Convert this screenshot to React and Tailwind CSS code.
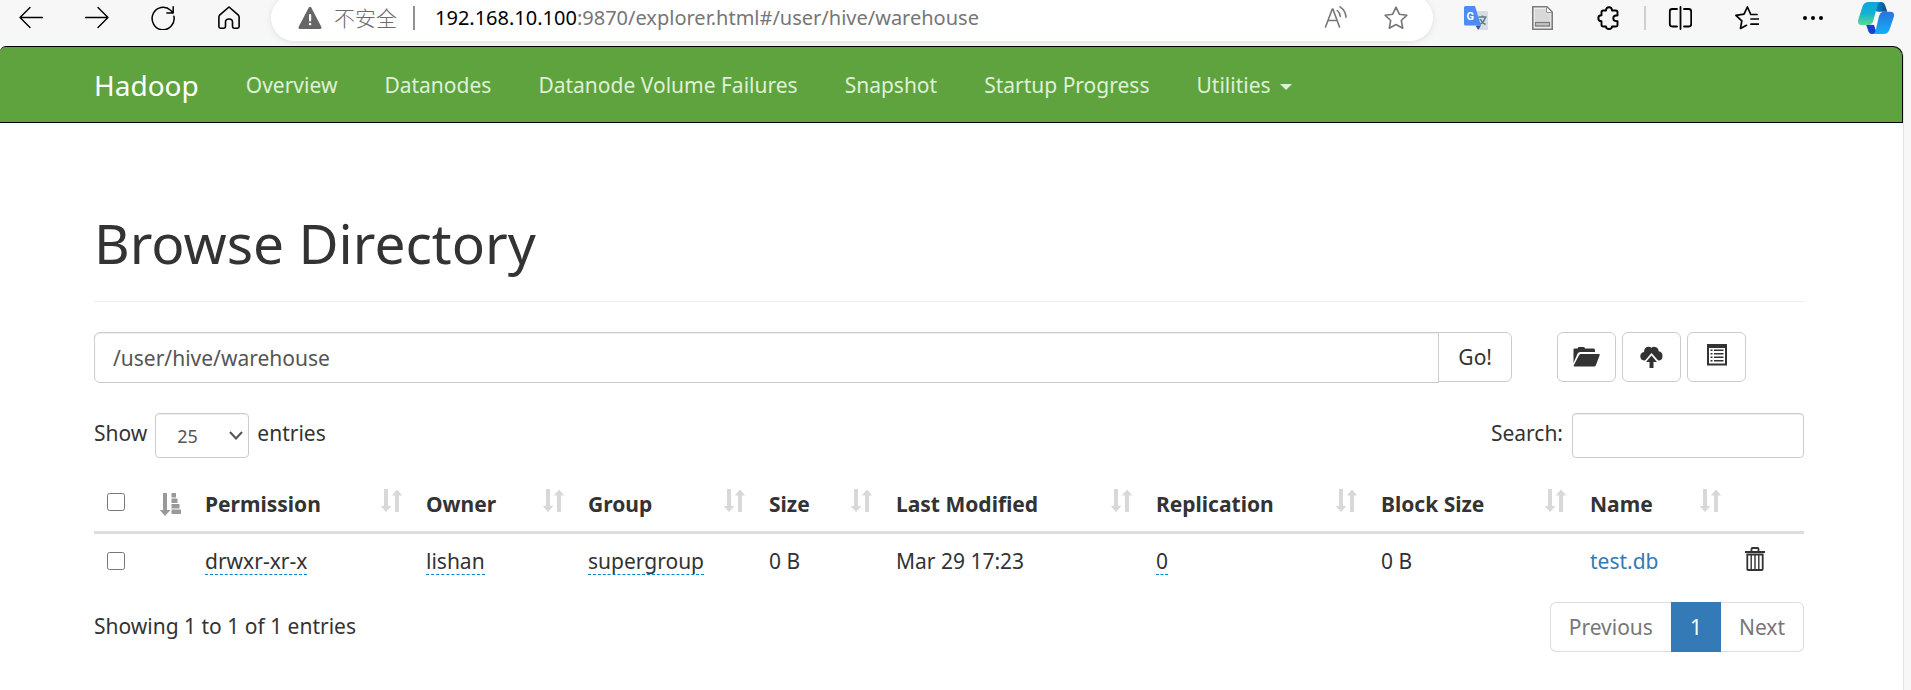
import React from "react";

const NAV = ["Overview", "Datanodes", "Datanode Volume Failures", "Snapshot", "Startup Progress"];

const COLUMNS = [
  { label: "Permission", width: "w-[221px]" },
  { label: "Owner", width: "w-[162px]" },
  { label: "Group", width: "w-[181px]" },
  { label: "Size", width: "w-[127px]" },
  { label: "Last Modified", width: "w-[260px]" },
  { label: "Replication", width: "w-[225px]" },
  { label: "Block Size", width: "w-[209px]" },
  { label: "Name", width: "w-[155px]" },
];

function Line({ children, className = "", width = 1.6 }) {
  return (
    <svg
      viewBox="0 0 24 24"
      className={"h-6 w-6 shrink-0 " + className}
      fill="none"
      stroke="currentColor"
      strokeWidth={width}
      strokeLinecap="round"
      strokeLinejoin="round"
      aria-hidden="true"
    >
      {children}
    </svg>
  );
}

function ToolButton({ label, children }) {
  return (
    <button type="button" aria-label={label} className="shrink-0">
      {children}
    </button>
  );
}

function BrowserBar() {
  return (
    <header className="h-[46px] overflow-hidden bg-[#f7f7f7] text-black">
      <div className="flex h-[35px] items-center pl-[19px] pr-[17px]">
        <div className="flex gap-[42px]">
          <ToolButton label="Back">
            <Line width={1.4}><path d="M23.5 11.5H1M11 1.5L1 11.5l10 10" /></Line>
          </ToolButton>
          <ToolButton label="Forward">
            <Line width={1.4}><path d="M.5 11.5H23M13 1.5l10 10-10 10" /></Line>
          </ToolButton>
          <ToolButton label="Refresh">
            <Line width={1.5}><path d="M22.9 10.2A11 11.3 0 1 1 19.6 4.2L22 6.7M22.2.8v6.1h-6.3" /></Line>
          </ToolButton>
          <ToolButton label="Home">
            <Line width={1.6}>
              <path d="M12 1L2.6 9.2Q1.9 9.9 1.9 11v9.6Q1.9 22.2 3.5 22.2h3.4Q8.500 22.200 8.500 20.600V16q0-3 3.500-3t3.500 3v4.600q0 1.600 1.600 1.600h3.400q1.600 0 1.600-1.600V11q0-1.100-.7-1.800L12 1z" />
            </Line>
          </ToolButton>
        </div>
        <div className="ml-[30px] mr-[31px] flex h-[46px] flex-1 items-center rounded-full bg-white pl-[27px] pr-[25px] shadow-[0_1px_6px_rgba(0,0,0,0.10)]">
          <svg viewBox="0 0 24 24" className="h-6 w-6 shrink-0" aria-hidden="true">
            <path d="M12 .8L23.300 20.800Q24 23 22 23H2Q0 23 .7 20.800L10.900 1.300Q12 .2 13.100 1.300L23.300 20.800" fill="#666" />
            <rect x="11" y="8" width="2.200" height="7.500" rx="1" fill="#fff" />
            <circle cx="12.100" cy="18" r="1.300" fill="#fff" />
          </svg>
          <span className="ml-3 text-[21px] font-light leading-[30px] text-[#6b6b6b]">不安全</span>
          <span className="ml-4 h-6 w-[2px] bg-[#919191]" />
          <p className="ml-5 flex-1 text-[20px] leading-[30px] text-[#767676]">
            <span className="text-black">192.168.10.100</span>:9870/explorer.html#/user/hive/warehouse
          </p>
          <div className="flex gap-9 text-[#767676]">
            <ToolButton label="Read aloud">
              <Line width={1.6}>
                <path d="M1.500 21L8.300 3h.6l6.600 18M4 14.500h9M13.300 4.500q2.700 2.200 3 6M16 .9q5.700 4 6 10.200" />
              </Line>
            </ToolButton>
            <ToolButton label="Add to favorites">
              <Line width={1.6}>
                <path d="M12 1.200l3.300 7 7.600 1-5.600 5.300 1.400 7.700L12 18.500l-6.700 3.700 1.400-7.700L1.100 9.200l7.600-1z" />
              </Line>
            </ToolButton>
          </div>
        </div>
        <div className="flex items-center">
          <ToolButton label="Translate">
            <svg viewBox="0 0 24 24" className="h-6 w-6" aria-hidden="true">
              <path d="M10 5h13q1 0 1 1v17q0 1-1 1H15z" fill="#d9dce0" />
              <path d="M14.500 11h8M18.500 9.500V11M21.500 11q-1.500 5-6 7.500M16 13q2 3.500 5.500 5.500" stroke="#5c7c8a" strokeWidth="1.500" fill="none" />
              <path d="M11.500 19.500H17L14.200 24z" fill="#3650ad" />
              <path d="M1.500 0H11l6 19.500H1.500Q0 19.500 0 18V1.500Q0 0 1.500 0z" fill="#4f8bf5" />
              <text x="2.500" y="13.500" fontSize="11" fontWeight="700" fill="#fff" fontFamily="Roboto, sans-serif">G</text>
            </svg>
          </ToolButton>
          <span className="w-[43px]" />
          <ToolButton label="Document extension">
            <svg viewBox="0 0 24 24" className="h-6 w-6" aria-hidden="true">
              <path d="M1.800.8H16l5.200 5.200v17.200H1.800z" fill="#f4f4f4" stroke="#7b7b7b" strokeWidth="1.600" />
              <path d="M3.800 2.800h11v4.700h4.600v13.800H3.800z" fill="#d8d8d8" />
              <path d="M15.500 1.500v5h5" fill="#fff" stroke="#8a8a8a" strokeWidth="1" />
              <rect x="4.500" y="16.500" width="14" height="3.500" fill="#c4c4c4" stroke="#7b7b7b" strokeWidth="1.200" />
            </svg>
          </ToolButton>
          <span className="w-[42px]" />
          <ToolButton label="Extensions">
            <Line width={1.900}>
              <path d="M6.300 4.500H9q0-3.300 3-3.300t3 3.300h3.700q1.800 0 1.800 1.800V9.500h-1.300q-2.900 0-2.900 2.800t2.900 2.800h1.300v3.600q0 1.800-1.800 1.800H15q0 2.500-3 2.500t-3-2.500H6.300q-1.800 0-1.800-1.800V15.200Q1.300 15.200 1.300 12.200T4.500 9.200V6.300q0-1.800 1.800-1.800z" />
            </Line>
          </ToolButton>
          <span className="ml-[23px] h-6 w-[2px] bg-[#cfcfcf]" />
          <span className="w-[22px]" />
          <ToolButton label="Split screen">
            <Line width={1.800}>
              <path d="M12.500 1v22M9 3H4.200Q1.800 3 1.800 5.400v12.700q0 2.400 2.400 2.400H9M16 3h4.800q2.400 0 2.400 2.400v12.700q0 2.400-2.400 2.400H16" />
            </Line>
          </ToolButton>
          <span className="w-[43px]" />
          <ToolButton label="Favorites">
            <Line width={1.700}>
              <path d="M22 8.500h-6.200L12.400 1 9 8.200.9 9.300l5.900 5.500L5.500 22.500l6-3.200M16 13h8M16 18.200h8" />
            </Line>
          </ToolButton>
          <span className="w-[42px]" />
          <ToolButton label="Settings and more">
            <svg viewBox="0 0 24 24" className="h-6 w-6" aria-hidden="true">
              <circle cx="4" cy="12" r="2" />
              <circle cx="12" cy="12" r="2" />
              <circle cx="20" cy="12" r="2" />
            </svg>
          </ToolButton>
          <span className="w-[33px]" />
          <ToolButton label="Copilot">
            <svg viewBox="0 0 36 32" className="h-8 w-9" aria-hidden="true">
              <defs>
                <linearGradient id="cpA" x1="0" y1="0" x2="0" y2="1">
                  <stop offset="0" stopColor="#0ea5dc" />
                  <stop offset=".5" stopColor="#14b1d2" />
                  <stop offset="1" stopColor="#59dd8b" />
                </linearGradient>
                <linearGradient id="cpB" x1="0" y1="0" x2="0" y2="1">
                  <stop offset="0" stopColor="#2a74d9" />
                  <stop offset="1" stopColor="#12b0fb" />
                </linearGradient>
                <linearGradient id="cpC" x1="0" y1="0" x2="1" y2="0">
                  <stop offset="0" stopColor="#0a8fd0" />
                  <stop offset="1" stopColor="#0b4a86" />
                </linearGradient>
              </defs>
              <path d="M16 0h7q3 0 4 3l2.300 6.800H20L17 9z" fill="url(#cpC)" />
              <path d="M8 22.500l2.500 7Q11.500 32 14 32h5l-3-9z" fill="#173fd6" />
              <path d="M10.500 0H23q-2.800 0-3.800 4L15.500 18q-1.300 5-5 5H3.500Q-1 23 .3 17.500L4.500 4.500Q6 0 10.500 0z" fill="url(#cpA)" />
              <path d="M25.500 32H14q2.800 0 3.800-4l3-13q1.300-5.200 5-5.200h6.700Q37 9.800 35.800 15l-4.300 12.500Q30 32 25.500 32z" fill="url(#cpB)" />
            </svg>
          </ToolButton>
        </div>
      </div>
    </header>
  );
}

function SortIcon({ active }) {
  return (
    <svg
      viewBox="0 0 21 23"
      className={"h-[23px] w-[21px] shrink-0 " + (active ? "text-[#999]" : "text-[#d8d8d8]")}
      fill="currentColor"
      aria-hidden="true"
    >
      <path d="M3 0h4v17h3.400L5 23 -.2 17H3z" />
      {active ? (
        <path d="M11.500 0H16v4.500h-4.500zM11.500 5.500h6v4.500h-6zM11.500 11h8v4.500h-8zM11.500 16.500h9.500V21h-9.500z" />
      ) : (
        <path d="M14 23h4V6.500h3.200L16 0.500 10.800 6.500H14z" />
      )}
    </svg>
  );
}

function IconButton({ label, children }) {
  return (
    <button
      type="button"
      aria-label={label}
      className="flex h-[50px] w-[59px] items-center justify-center rounded-[6px] border border-[#ccc] bg-white text-[#333]"
    >
      {children}
    </button>
  );
}

function Editable({ children }) {
  return (
    <button type="button" className="border-b border-dashed border-[#0088cc] leading-[26px]">
      {children}
    </button>
  );
}

const field = "border border-[#ccc] bg-white text-[#555] shadow-[inset_0_1px_1px_rgba(0,0,0,0.075)] outline-none";

export default function App() {
  return (
    <div className="min-h-screen bg-[#f7f7f7] font-['Noto_Sans','Noto_Sans_CJK_SC',sans-serif] text-[21px] leading-[30px] text-[#333]">
      <BrowserBar />
      <div className="mr-[7px] min-h-[calc(100vh-46px)] rounded-tr-[10px] border-r border-[#e2e2e2] bg-white">
        <nav className="flex items-center gap-[47px] rounded-tl-[6px] rounded-tr-[10px] border-y border-r border-black bg-[#5fa33e] pb-[22px] pl-[94px] pt-[23px] text-[#dff0d8]">
          <a href="#hadoop" className="text-[28px] text-white">Hadoop</a>
          {NAV.map((n) => (
            <a key={n} href="#nav">{n}</a>
          ))}
          <button type="button" className="flex items-center gap-[9px]">
            Utilities
            <svg viewBox="0 0 12 6" className="mt-1 h-[6px] w-3" fill="currentColor" aria-hidden="true">
              <path d="M0 0h12L6 6z" />
            </svg>
          </button>
        </nav>

        <main className="pl-[94px] pr-[99px] pt-[90px]">
          <h1 className="border-b border-[#eee] pb-7 text-[55px] leading-[60px]">Browse Directory</h1>

          <div className="mt-[30px] flex items-start">
            <form className="flex flex-1 items-start" onSubmit={(e) => e.preventDefault()}>
              <input
                aria-label="Directory"
                defaultValue="/user/hive/warehouse"
                className={"h-[51px] min-w-0 flex-1 rounded-l-[6px] px-[18px] " + field}
              />
              <button type="submit" className="-ml-px h-[50px] rounded-r-[6px] border border-[#ccc] bg-white px-[19px]">
                Go!
              </button>
            </form>
            <div className="ml-[45px] mr-[58px] flex gap-[6px]">
              <IconButton label="Create directory">
                <svg viewBox="0 0 27 20" className="h-5 w-[27px]" fill="currentColor" aria-hidden="true">
                  <path d="M.5 16V2.500Q.5 1.500 1.500 1.500h3L5.500 0H11l1.200 1.500h8.300q1.500 0 1.500 1.500v2H7Q5.300 5 4.600 6.500z" />
                  <path d="M8 7h18q1 0 .7 1L23 18q-.5 1.500-2 1.500H1.500Q.3 19.500.800 18.300L6 8.200Q6.600 7 8 7z" />
                </svg>
              </IconButton>
              <IconButton label="Upload files">
                <svg viewBox="0 0 23 22" className="h-[22px] w-[23px]" fill="currentColor" aria-hidden="true">
                  <path d="M5 14.500Q.3 14.500.3 10.300.3 6.700 4 6 4 1.500 8 .8q2-.3 3.500 1Q13 .5 15.200 1q3.300.8 3.500 4.300 3.800.7 3.800 4.700 0 4.500-4.300 4.500L11.500 7z" />
                  <path d="M11.500 9.500L17 16h-3.500v6h-4v-6H6z" />
                </svg>
              </IconButton>
              <IconButton label="Cut and paste">
                <svg viewBox="0 0 20 22" className="-mt-1 h-[22px] w-5" fill="currentColor" aria-hidden="true">
                  <path fillRule="evenodd" d="M0 0h20v21.500H0zM2 4v15.500h16V4z" />
                  <path d="M3.500 5.500h2v1.500h-2zM7 5.500h9.500v1.500H7zM3.500 9h2v1.500h-2zM7 9h9.500v1.500H7zM3.500 12.500h2v1.500h-2zM7 12.500h9.500v1.500H7zM3.500 16h2v1.500h-2zM7 16h9.500v1.500H7z" />
                </svg>
              </IconButton>
            </div>
          </div>

          <div className="mt-[30px] flex items-start justify-between leading-10">
            <div className="flex items-start gap-2">
              <label htmlFor="page-size">Show</label>
              <div className="relative h-[45px] w-[94px]">
                <select
                  id="page-size"
                  defaultValue="25"
                  className={"h-[45px] w-full appearance-none rounded-[4px] pl-[21px] text-[18px] leading-[30px] " + field}
                >
                  <option>10</option>
                  <option>25</option>
                  <option>50</option>
                  <option>100</option>
                </select>
                <svg viewBox="0 0 14 9" className="pointer-events-none absolute right-[6px] top-[18px] h-[9px] w-[14px]" fill="none" stroke="#555" strokeWidth="2" aria-hidden="true">
                  <path d="M1 1l6 6.500L13 1" />
                </svg>
              </div>
              <span>entries</span>
            </div>
            <label className="flex items-start gap-[9px]">
              Search:
              <input type="search" className={"h-[45px] w-[232px] rounded-[4px] px-[15px] text-[18px] " + field} />
            </label>
          </div>

          <table className="mt-[19px] w-full table-fixed border-collapse text-left">
            <thead>
              <tr className="border-b-[3px] border-[#ddd]">
                <th className="w-[99px] p-3">
                  <div className="flex items-start justify-between">
                    <input type="checkbox" aria-label="Select all" className="ml-px h-[18px] w-[18px]" />
                    <SortIcon active />
                  </div>
                </th>
                {COLUMNS.map((c) => (
                  <th key={c.label} className={"p-3 font-bold " + c.width}>
                    <div className="flex items-start justify-between whitespace-nowrap">
                      {c.label}
                      <SortIcon />
                    </div>
                  </th>
                ))}
                <th className="w-[71px] p-3" aria-label="Delete" />
              </tr>
            </thead>
            <tbody>
              <tr>
                <td className="p-3">
                  <input type="checkbox" aria-label="Select test.db" className="ml-px block h-[18px] w-[18px]" />
                </td>
                <td className="px-3"><Editable>drwxr-xr-x</Editable></td>
                <td className="px-3"><Editable>lishan</Editable></td>
                <td className="px-3"><Editable>supergroup</Editable></td>
                <td className="px-3">0 B</td>
                <td className="px-3">Mar 29 17:23</td>
                <td className="px-3"><Editable>0</Editable></td>
                <td className="px-3">0 B</td>
                <td className="p-3"><a href="#test.db" className="text-[#337ab7]">test.db</a></td>
                <td className="px-3">
                  <button type="button" aria-label="Delete test.db" className="mb-1 block">
                    <svg viewBox="0 0 20 24" className="h-6 w-5" fill="none" stroke="#333" aria-hidden="true">
                      <path d="M0 5h20" strokeWidth="2" />
                      <path d="M6.500 4V2q0-1 1-1h5q1 0 1 1v2" strokeWidth="1.800" />
                      <path d="M2.300 7.500h15.400v14.500q0 1-1 1H3.300q-1 0-1-1z" strokeWidth="1.800" />
                      <path d="M6.200 8v14M10 8v14M13.800 8v14" strokeWidth="1.400" />
                    </svg>
                  </button>
                </td>
              </tr>
            </tbody>
          </table>

          <div className="mt-[14px] flex items-start justify-between">
            <p className="leading-[48px]">Showing 1 to 1 of 1 entries</p>
            <div className="flex h-[50px] text-[#777]">
              <button type="button" className="rounded-l-[6px] border border-r-0 border-[#ddd] bg-white px-[18px]">Previous</button>
              <button type="button" aria-current="page" className="border border-[#337ab7] bg-[#337ab7] px-[18px] text-white">1</button>
              <button type="button" className="rounded-r-[6px] border border-l-0 border-[#ddd] bg-white px-[18px]">Next</button>
            </div>
          </div>
        </main>
      </div>
    </div>
  );
}
